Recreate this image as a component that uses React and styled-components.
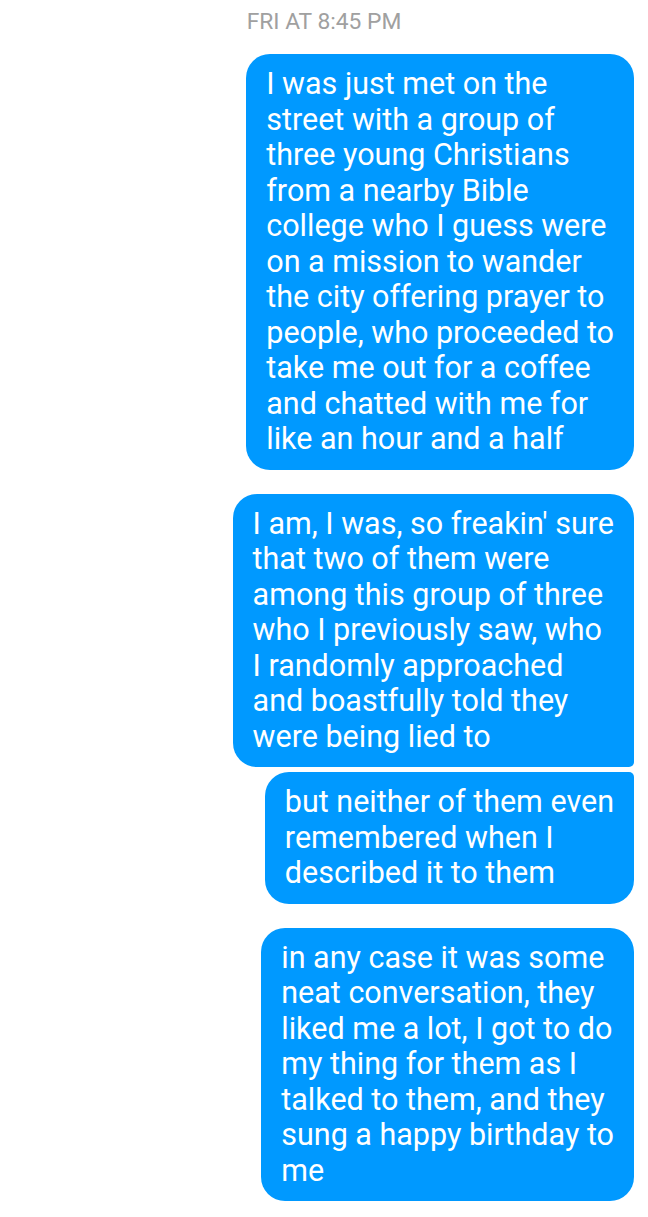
import React from 'react';
import styled, { createGlobalStyle } from 'styled-components';

const messages = [
  {
    id: 1,
    pos: 'single',
    lines: [
      'I was just met on the',
      'street with a group of',
      'three young Christians',
      'from a nearby Bible',
      'college who I guess were',
      'on a mission to wander',
      'the city offering prayer to',
      'people, who proceeded to',
      'take me out for a coffee',
      'and chatted with me for',
      'like an hour and a half',
    ],
  },
  {
    id: 2,
    pos: 'first',
    lines: [
      "I am, I was, so freakin' sure",
      'that two of them were',
      'among this group of three',
      'who I previously saw, who',
      'I randomly approached',
      'and boastfully told they',
      'were being lied to',
    ],
  },
  {
    id: 3,
    pos: 'last',
    lines: [
      'but neither of them even',
      'remembered when I',
      'described it to them',
    ],
  },
  {
    id: 4,
    pos: 'single',
    lines: [
      'in any case it was some',
      'neat conversation, they',
      'liked me a lot, I got to do',
      'my thing for them as I',
      'talked to them, and they',
      'sung a happy birthday to',
      'me',
    ],
  },
];

function App() {
  return (
    <>
      <GlobalStyle />
      <Thread>
        <Stamp>FRI AT 8:45 PM</Stamp>
        {messages.map((m) => (
          <Bubble key={m.id} $pos={m.pos}>
            {m.lines.map((line, i) => (
              <React.Fragment key={i}>
                {line}
                {i < m.lines.length - 1 && <br />}
              </React.Fragment>
            ))}
          </Bubble>
        ))}
      </Thread>
    </>
  );
}

const GlobalStyle = createGlobalStyle`
  body {
    margin: 0;
    background: #fff;
    font-family: Roboto, "Noto Sans", sans-serif;
  }
`;

const Thread = styled.div`
  display: flex;
  flex-direction: column;
  align-items: flex-end;
  padding: 8px 0 16px 0;
  width: 648px;
  box-sizing: border-box;
`;

const Stamp = styled.div`
  align-self: center;
  color: #a0a0a0;
  font-size: 22.8px;
  line-height: 28px;
  margin-bottom: 18px;
`;

const radius = {
  single: '24px',
  first: '24px 24px 5px 24px',
  last: '24px 5px 24px 24px',
};

const gaps = {
  single: '24px',
  first: '5px',
  last: '24px',
};

const Bubble = styled.div`
  background: #0099ff;
  color: #fff;
  font-size: 30.5px;
  line-height: 35.5px;
  white-space: nowrap;
  padding: 12px 20px 13px 20px;
  margin-right: 14px;
  border-radius: ${(p) => radius[p.$pos]};
  margin-bottom: ${(p) => gaps[p.$pos]};
`;

export default App;
